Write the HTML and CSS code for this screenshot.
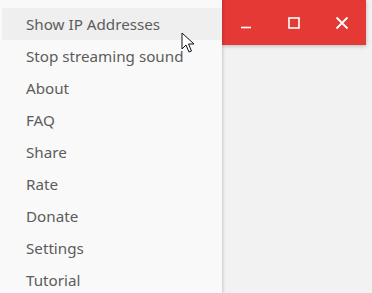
FILE: index.html
```html
<!DOCTYPE html>
<html lang="en">
<head>
    <meta charset="UTF-8">
    <title>Menu</title>
    <link rel="stylesheet" href="styles.css">
</head>
<body>
    <div class="screen">
        <div class="menu">
            <div class="item hover">Show IP Addresses</div>
            <div class="item">Stop streaming sound</div>
            <div class="item">About</div>
            <div class="item">FAQ</div>
            <div class="item">Share</div>
            <div class="item">Rate</div>
            <div class="item">Donate</div>
            <div class="item">Settings</div>
            <div class="item">Tutorial</div>
        </div>
        <div class="main">
            <div class="title-bar">
                <div class="ctl">
                    <svg width="12" height="12" viewBox="0 0 12 12"><path d="M1 10.5h10" stroke="#fff" stroke-width="1.6"/></svg>
                </div>
                <div class="ctl">
                    <svg width="12" height="12" viewBox="0 0 12 12"><rect x="1" y="1" width="10" height="10" fill="none" stroke="#fff" stroke-width="1.6"/></svg>
                </div>
                <div class="ctl">
                    <svg width="14" height="14" viewBox="0 0 14 14"><path d="M1.5 1.5l11 11M12.5 1.5l-11 11" stroke="#fff" stroke-width="1.8"/></svg>
                </div>
            </div>
            <div class="window-body"></div>
        </div>
        <svg class="cursor" width="14" height="22" viewBox="0 0 14 22">
            <path d="M1 1v16l4-4 3 7 2.5-1-3-7h5.5z" fill="#fff" stroke="#111" stroke-width="1" stroke-linejoin="round"/>
        </svg>
    </div>
</body>
</html>
```

FILE: styles.css
```css
body {
    margin: 0;
    padding: 0;
    font-family: "Noto Sans", "Open Sans", sans-serif;
    background: #f2f2f2;
}
.screen {
    position: relative;
    width: 372px;
    height: 293px;
    display: flex;
    overflow: hidden;
}
.menu {
    width: 222px;
    padding-top: 8px;
    background: #f9f9f9;
    box-shadow: 1px 0 3px rgba(0, 0, 0, 0.18);
    z-index: 2;
}
.item {
    height: 32px;
    line-height: 32px;
    margin-left: 2px;
    padding-left: 24px;
    font-size: 15.2px;
    color: #5c5c5c;
    white-space: nowrap;
}
.item.hover {
    background: #efefef;
}
.main {
    flex: 1;
    display: flex;
    flex-direction: column;
}
.title-bar {
    height: 45px;
    width: 144px;
    background: #e53935;
    display: flex;
    box-shadow: 0 1px 4px rgba(0, 0, 0, 0.25);
}
.ctl {
    width: 48px;
    display: flex;
    align-items: center;
    justify-content: center;
}
.window-body {
    flex: 1;
}
.cursor {
    position: absolute;
    left: 181px;
    top: 32px;
    z-index: 3;
}
```
